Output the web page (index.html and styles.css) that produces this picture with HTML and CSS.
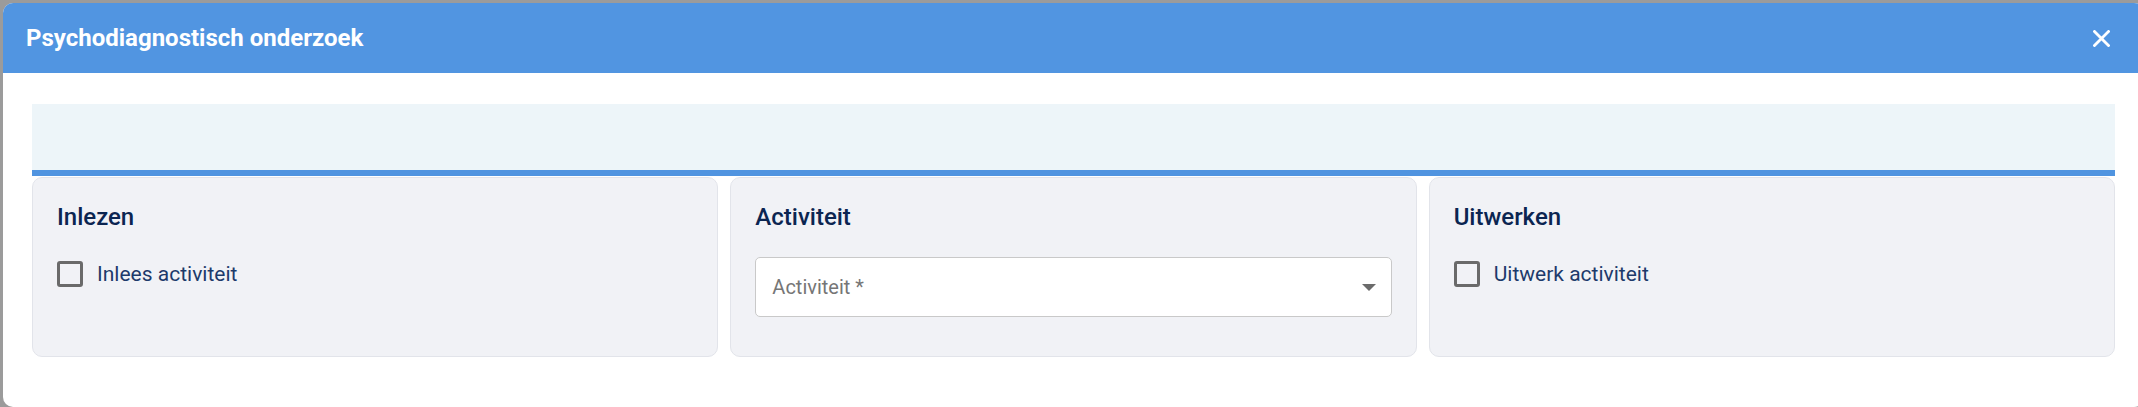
FILE: index.html
```html
<!DOCTYPE html>
<html lang="nl">
<head>
<meta charset="utf-8">
<title>Psychodiagnostisch onderzoek</title>
<link rel="stylesheet" href="styles.css">
</head>
<body>
<div class="modal">
  <header class="modal-header">
    <h1 class="modal-title">Psychodiagnostisch onderzoek</h1>
    <button class="close-btn" aria-label="Sluiten">
      <svg width="17" height="17" viewBox="0 0 17 17"><path d="M1.5 1.5 L15.5 15.5 M15.5 1.5 L1.5 15.5" stroke="#fff" stroke-width="2.8" stroke-linecap="square" fill="none"/></svg>
    </button>
  </header>
  <div class="modal-body">
    <div class="banner"></div>
    <div class="cards">
      <section class="card">
        <h2 class="card-title">Inlezen</h2>
        <label class="check-row"><span class="checkbox"></span><span class="check-label">Inlees activiteit</span></label>
      </section>
      <section class="card">
        <h2 class="card-title">Activiteit</h2>
        <div class="select">
          <span class="placeholder">Activiteit *</span>
          <svg class="caret" width="14" height="7" viewBox="0 0 14 7"><path d="M0 0 H14 L7 7 Z" fill="#6b6b6b"/></svg>
        </div>
      </section>
      <section class="card">
        <h2 class="card-title">Uitwerken</h2>
        <label class="check-row"><span class="checkbox"></span><span class="check-label">Uitwerk activiteit</span></label>
      </section>
    </div>
  </div>
</div>
</body>
</html>
```
FILE: styles.css
```css
html, body {
  margin: 0;
  padding: 0;
}
body {
  background: #9b9b9b;
  font-family: Roboto, "Liberation Sans", sans-serif;
  overflow: hidden;
  width: 2138px;
  height: 407px;
}
.modal {
  margin: 3px 0 0 3px;
  width: 2141px;
  height: 404px;
  background: #ffffff;
  border-radius: 10px;
  overflow: hidden;
  display: flex;
  flex-direction: column;
}
.modal-header {
  height: 70px;
  flex: none;
  background: #5195e1;
  display: flex;
  align-items: center;
  justify-content: space-between;
  padding: 0 34px 0 23px;
}
.modal-title {
  margin: 0;
  color: #ffffff;
  font-size: 24px;
  font-weight: 700;
  letter-spacing: 0;
}
.close-btn {
  background: none;
  border: 0;
  padding: 0;
  margin: 0 0 0 0;
  width: 17px;
  height: 17px;
  display: flex;
  margin-right: 0;
  position: relative;
  left: 0;
}
.modal-header .close-btn {
  margin-right: 0;
}
.modal-body {
  padding: 31px 29px 0 29px;
}
.banner {
  height: 66px;
  background: #edf5f9;
  border-bottom: 6px solid #5094e0;
}
.cards {
  margin-top: 1px;
  display: grid;
  grid-template-columns: repeat(3, 1fr);
  gap: 12px;
}
.card {
  height: 180px;
  box-sizing: border-box;
  background: #f1f2f6;
  border: 1px solid #e2e4ea;
  border-radius: 10px;
  padding: 25px 24px;
}
.card-title {
  margin: 0 0 26px 0;
  font-size: 24px;
  font-weight: 500;
  color: #0b2551;
  line-height: 28px;
}
.check-row {
  display: flex;
  align-items: center;
  gap: 14px;
  padding-top: 4px;
}
.checkbox {
  width: 26px;
  height: 26px;
  box-sizing: border-box;
  border: 3px solid #6a6a6a;
  border-radius: 3px;
  flex: none;
}
.check-label {
  font-size: 21px;
  color: #1d3a6b;
}
.select {
  height: 60px;
  box-sizing: border-box;
  background: #ffffff;
  border: 1px solid #c9c9c9;
  border-radius: 5px;
  display: flex;
  align-items: center;
  justify-content: space-between;
  padding: 0 15px 0 16px;
}
.placeholder {
  font-size: 20px;
  color: #767676;
}
```
